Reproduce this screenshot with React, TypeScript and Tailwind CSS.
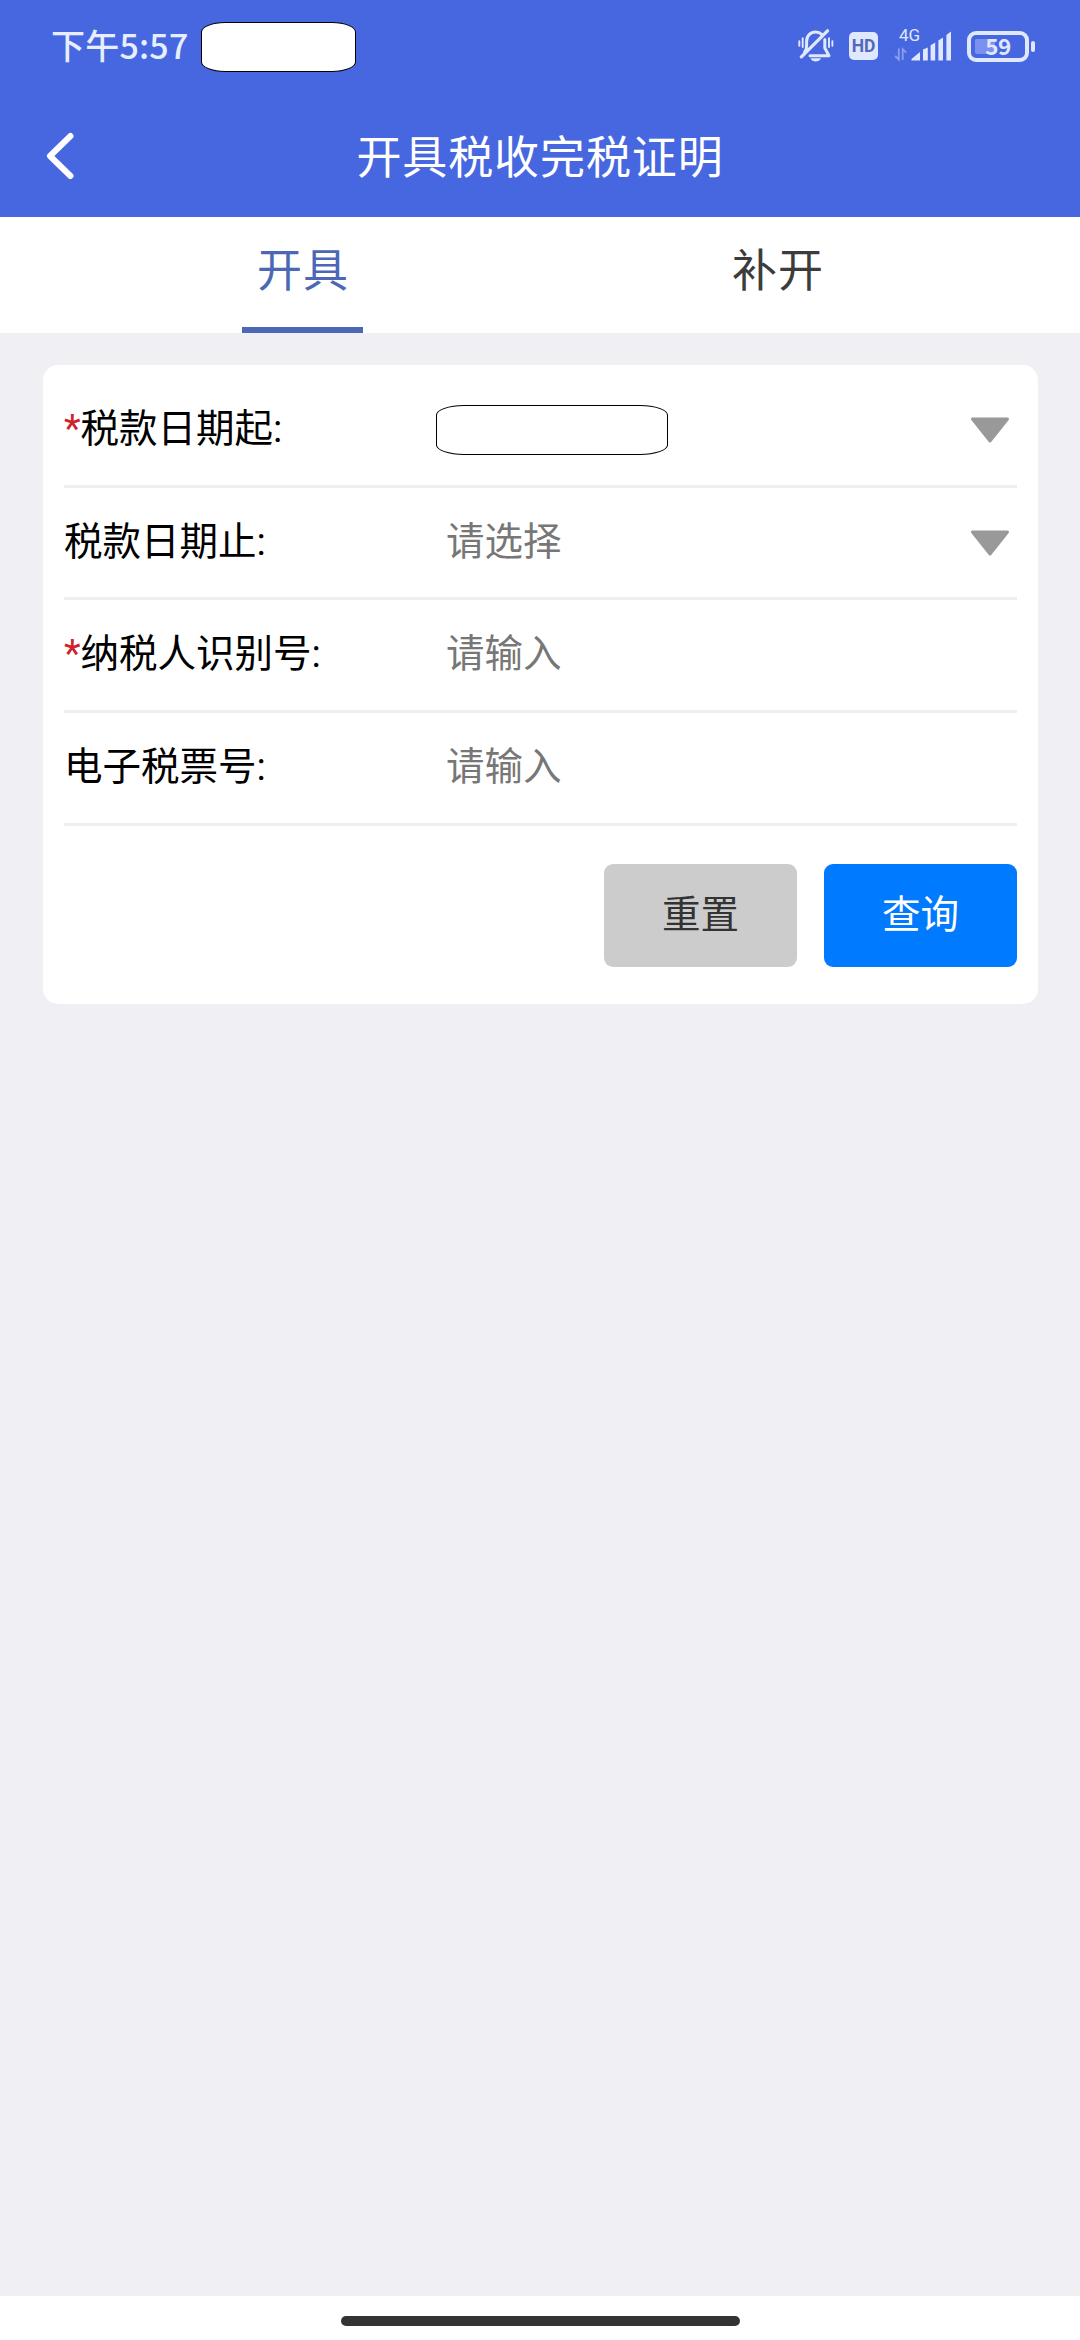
import React from "react";

function BellOff() {
  return (
    <svg className="h-[34px] w-[36px]" viewBox="0 0 36 34" fill="none" stroke="#dfe8ff" strokeWidth="3" strokeLinecap="round" strokeLinejoin="round">
      <path d="M8.6 17 V12.5 C8.6 6.8 12.3 3 17.6 3 C20.2 3 22.4 4 24 5.6" />
      <path d="M26.8 10.5 V19 L31 26.8 H12" />
      <path d="M8.4 17 V19.6 L6.6 23" />
      <path d="M29.5 1.8 L3.4 27.8" strokeWidth="3.3" />
      <path d="M12.5 29.3 H23 C22 31.6 20 32.6 17.7 32.6 C15.4 32.6 13.4 31.6 12.5 29.3 Z" fill="#dfe8ff" stroke="none" />
      <path d="M1.3 12.2 V16.8 M4.7 9.2 V18 M31 9.2 V18 M34.4 12.2 V16.8" strokeWidth="1.9" />
    </svg>
  );
}

function Signal() {
  return (
    <div className="relative h-[34px] w-[58px]">
      <svg className="h-[34px] w-[58px]" viewBox="0 0 58 34">
        <g fill="#dfe8ff">
          <path d="M17.5 31.5 V30 L26 23 V31.5 Z" />
          <path d="M29 20.6 L33.8 18.4 V31.5 H29 Z" />
          <path d="M36.6 16.2 L41.2 13.6 V31.5 H36.6 Z" />
          <path d="M44.4 11.6 L49 8.6 V31.5 H44.4 Z" />
          <path d="M52.4 6 L57 2.6 V31.5 H52.4 Z" />
        </g>
        <path d="M4.8 19.5 V30.5 L1.2 27 M8.7 31 V20.2 L12.2 23.6" fill="none" stroke="#8b9ef0" strokeWidth="1.8" />
      </svg>
      <span className="absolute left-[5px] top-[-2px] text-[17px] leading-[16px] text-[#dfe8ff]">4G</span>
    </div>
  );
}

function Battery() {
  return (
    <div className="flex items-center gap-[2px]">
      <div className="relative flex h-[31px] w-[62px] items-center justify-center rounded-[9px] border-4 border-[#dfe8ff]">
        <div className="absolute left-[4px] top-[4px] h-[15px] w-[20px] rounded-[2px] bg-[#7b90f0]" />
        <span className="relative top-[-1px] font-['Noto_Sans_CJK_SC',sans-serif] text-[22.5px] font-bold leading-[22px] tracking-[-0.6px] text-[#dfe8ff]">59</span>
      </div>
      <div className="h-[11px] w-[4px] rounded-[2px] bg-[#dfe8ff]" />
    </div>
  );
}

function StatusBar() {
  return (
    <div className="flex h-[92px] items-center justify-between pl-[51px] pr-[45px]">
      <div className="flex items-center">
        <span className="mt-[-2px] w-[150px] whitespace-nowrap font-['Noto_Sans_CJK_SC',sans-serif] text-[34px] font-medium leading-[48px] tracking-[0.2px] text-[#e6eeff]">
          下午5:57
        </span>
        <div className="mt-[1px] h-[50px] w-[155px] rounded-[24px/10px] border border-black bg-white" />
      </div>
      <div className="flex items-center">
        <BellOff />
        <div className="ml-[15px] flex h-[28px] w-[29px] items-center justify-center rounded-[5px] bg-[#dfe8ff] pt-[2px] text-[17.5px] font-bold leading-none text-[#5468b8]">
          HD
        </div>
        <div className="ml-[16px]">
          <Signal />
        </div>
        <div className="ml-[15px]">
          <Battery />
        </div>
      </div>
    </div>
  );
}

function Tab({ label, active }: { label: string; active?: boolean }) {
  return (
    <button className={`relative flex h-full flex-col items-center text-[45px] ${active ? "text-[#4c68b4]" : "text-[#3c3c3c]"}`}>
      <span className="mt-[22px] pl-[1px] leading-[66px] tracking-[1px]">{label}</span>
      {active && <span className="absolute bottom-0 h-[6px] w-[121px] bg-[#4c68b4]" />}
    </button>
  );
}

function Row({ label, required, children, arrow }: { label: string; required?: boolean; children: React.ReactNode; arrow?: boolean }) {
  return (
    <div className="flex h-[112.7px] items-center border-b-[3px] border-[#efefef]">
      <div className="mt-[-2px] w-[382px] whitespace-nowrap text-[38.5px] leading-[56px] text-black">
        {required && <span className="text-[#d0222c]">*</span>}
        {label}:
      </div>
      <div className="flex-1 text-[38.5px] leading-[56px] text-[#777]">{children}</div>
      {arrow && (
        <svg className="mr-[7px] mt-[1px] h-[26px] w-[40px]" viewBox="0 0 40 26">
          <path d="M2.5 2 H37.5 L20 24 Z" fill="#999" stroke="#999" strokeWidth="3" strokeLinejoin="round" />
        </svg>
      )}
    </div>
  );
}

export default function App() {
  return (
    <div className="flex h-[2340px] w-[1080px] flex-col bg-[#efeff4] font-[Roboto,'Noto_Sans_CJK_SC',sans-serif]">
      <header className="h-[217px] bg-[#4767e0]">
        <StatusBar />
        <div className="grid h-[125px] grid-cols-[100px_1fr_100px] items-center">
          <svg className="ml-[44px] mt-[2px] h-[52px] w-[34px]" viewBox="0 0 34 52" fill="none" stroke="#fff" strokeWidth="6" strokeLinecap="round" strokeLinejoin="round">
            <path d="M26.5 6 L6 26 L26.5 46" />
          </svg>
          <h1 className="mt-[8px] text-center text-[45px] leading-[66px] tracking-[0.9px] text-white">开具税收完税证明</h1>
        </div>
      </header>
      <nav className="grid h-[116px] grid-cols-2 bg-white px-[65px]">
        <Tab label="开具" active />
        <Tab label="补开" />
      </nav>
      <main className="flex-1 px-[43px] pt-[32px]">
        <section className="h-[639px] w-[995px] rounded-[15px] bg-white px-[21px] pt-[10px]">
          <Row label="税款日期起" required arrow>
            <div className="ml-[-10px] h-[50px] w-[232px] rounded-[28px/10px] border border-black bg-white" />
          </Row>
          <Row label="税款日期止" arrow><span className="relative top-[-1px]">请选择</span></Row>
          <Row label="纳税人识别号" required><span className="relative top-[-1px]">请输入</span></Row>
          <Row label="电子税票号"><span className="relative top-[-1px]">请输入</span></Row>
          <div className="mt-[38px] flex justify-end gap-[27px] text-[38.5px]">
            <button className="h-[103px] w-[193px] rounded-[9px] bg-[#ccc] text-[#333]">重置</button>
            <button className="h-[103px] w-[193px] rounded-[9px] bg-[#007aff] text-white">查询</button>
          </div>
        </section>
      </main>
      <footer className="flex h-[44px] justify-center bg-white pt-[20px]">
        <div className="h-[10px] w-[399px] rounded-full bg-[#333]" />
      </footer>
    </div>
  );
}
